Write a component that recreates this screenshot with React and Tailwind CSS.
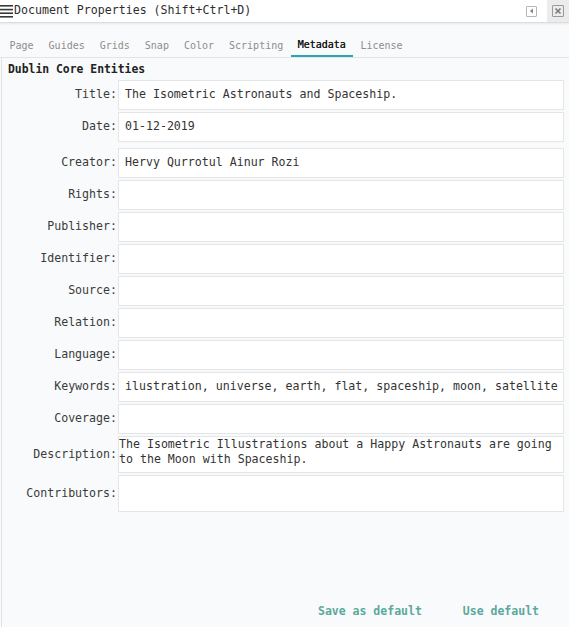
import React from 'react';

const rows = [
    { label: 'Title', value: 'The Isometric Astronauts and Spaceship.', mt: 'mt-0' },
    { label: 'Date', value: '01-12-2019', mt: 'mt-[2px]' },
    { label: 'Creator', value: 'Hervy Qurrotul Ainur Rozi', mt: 'mt-[6px]' },
    { label: 'Rights', value: '', mt: 'mt-[2px]' },
    { label: 'Publisher', value: '', mt: 'mt-[2px]' },
    { label: 'Identifier', value: '', mt: 'mt-[2px]' },
    { label: 'Source', value: '', mt: 'mt-[2px]' },
    { label: 'Relation', value: '', mt: 'mt-[2px]' },
    { label: 'Language', value: '', mt: 'mt-[2px]' },
    { label: 'Keywords', value: 'ilustration, universe, earth, flat, spaceship, moon, satellite', mt: 'mt-[2px]' },
    { label: 'Coverage', value: '', mt: 'mt-[2px]' },
];

const tabs = ['Page', 'Guides', 'Grids', 'Snap', 'Color', 'Scripting', 'Metadata', 'License'];

function HeaderIcons() {
    return (
        <div className="flex items-center h-full">
            <div className="w-[11px] h-[11px] border border-[#b5b5b5] rounded-[1px] flex items-center justify-center mr-[10px]">
                <svg width="5" height="6" viewBox="0 0 5 6"><path d="M4 0.5 L0.8 3 L4 5.5 Z" fill="#8a8a8a" /></svg>
            </div>
            <div className="w-[22px] h-full bg-[#ececec] flex items-center justify-center">
                <div className="w-[12px] h-[12px] border border-[#9a9a9a] rounded-[1px] flex items-center justify-center">
                    <svg width="8" height="8" viewBox="0 0 8 8"><path d="M1.5 1.5 L6.5 6.5 M6.5 1.5 L1.5 6.5" stroke="#7a7a7a" strokeWidth="1.6" /></svg>
                </div>
            </div>
        </div>
    );
}

export default function App() {
    return (
        <div className="w-[569px] h-[627px] overflow-hidden flex flex-col bg-[#f9fafb] text-[#333] font-['DejaVu_Sans_Mono','Liberation_Mono',monospace]">
            <div className="h-[23px] shrink-0 bg-white flex items-center justify-between border-b border-[#dcdcdc] shadow-[0_1px_2px_rgba(0,0,0,0.08)]">
                <div className="flex items-center h-full">
                    <svg width="13" height="14" viewBox="0 0 13 14" className="mr-px">
                        <rect x="0" y="1" width="13" height="1.6" fill="#3a3a3a" />
                        <rect x="0" y="4.8" width="13" height="1.6" fill="#3a3a3a" />
                        <rect x="0" y="8.4" width="13" height="1.6" fill="#3a3a3a" />
                        <rect x="0" y="12" width="13" height="1.6" fill="#3a3a3a" />
                    </svg>
                    <span className="text-[11.6px] text-[#2e2e2e]">Document Properties (Shift+Ctrl+D)</span>
                </div>
                <HeaderIcons />
            </div>

            <div className="flex items-end h-[35px] shrink-0 pl-[2px] border-b border-[#e2e4e6]">
                {tabs.map(t => (
                    <div
                        key={t}
                        className={
                            t === 'Metadata'
                                ? 'px-[7px] h-[22px] flex items-start pt-[2px] text-[10px] text-[#1a1a1a] [text-shadow:0_0_0.4px_#1a1a1a] border-b-2 border-[#2aa7b5]'
                                : 'px-[7.5px] h-[22px] flex items-start pt-[3px] text-[10px] text-[#8d8d8d]'
                        }
                    >
                        {t}
                    </div>
                ))}
            </div>

            <div className="flex-1 flex flex-col border-l border-[#dfe1e3] ml-px">
                <div className="pl-[6px] pt-[3px] text-[11.4px] font-bold text-[#222]">Dublin Core Entities</div>
                <div className="flex flex-col pt-[2px] pr-[5px]">
                    {rows.map(r => (
                        <div key={r.label} className={`flex items-center ${r.mt}`}>
                            <div className="w-[115px] text-right text-[11.6px] text-[#3a3a3a]">{r.label}:</div>
                            <div className="ml-[1px] flex-1 h-[30px] bg-white border border-[#e3e5e7] flex items-center pl-[6px] text-[11.6px] text-[#333] whitespace-nowrap overflow-hidden">
                                {r.value}
                            </div>
                        </div>
                    ))}
                    <div className="flex items-center mt-[2px]">
                        <div className="w-[115px] text-right text-[11.6px] text-[#3a3a3a]">Description:</div>
                        <div className="ml-[1px] flex-1 h-[37px] bg-white border border-[#e3e5e7] text-[11.6px] leading-[15px] text-[#333] pl-0 pt-0">
                            The Isometric Illustrations about a Happy Astronauts are going to the Moon with Spaceship.
                        </div>
                    </div>
                    <div className="flex items-center mt-[2px]">
                        <div className="w-[115px] text-right text-[11.6px] text-[#3a3a3a]">Contributors:</div>
                        <div className="ml-[1px] flex-1 h-[37px] bg-white border border-[#e3e5e7]" />
                    </div>
                </div>
                <div className="flex-1" />
                <div className="flex justify-end items-center h-[34px] pt-[4px] pr-[30px] gap-[41px]">
                    <span className="text-[11.5px] font-bold text-[#5aa99c]">Save as default</span>
                    <span className="text-[11.5px] font-bold text-[#5aa99c]">Use default</span>
                </div>
            </div>
        </div>
    );
}
